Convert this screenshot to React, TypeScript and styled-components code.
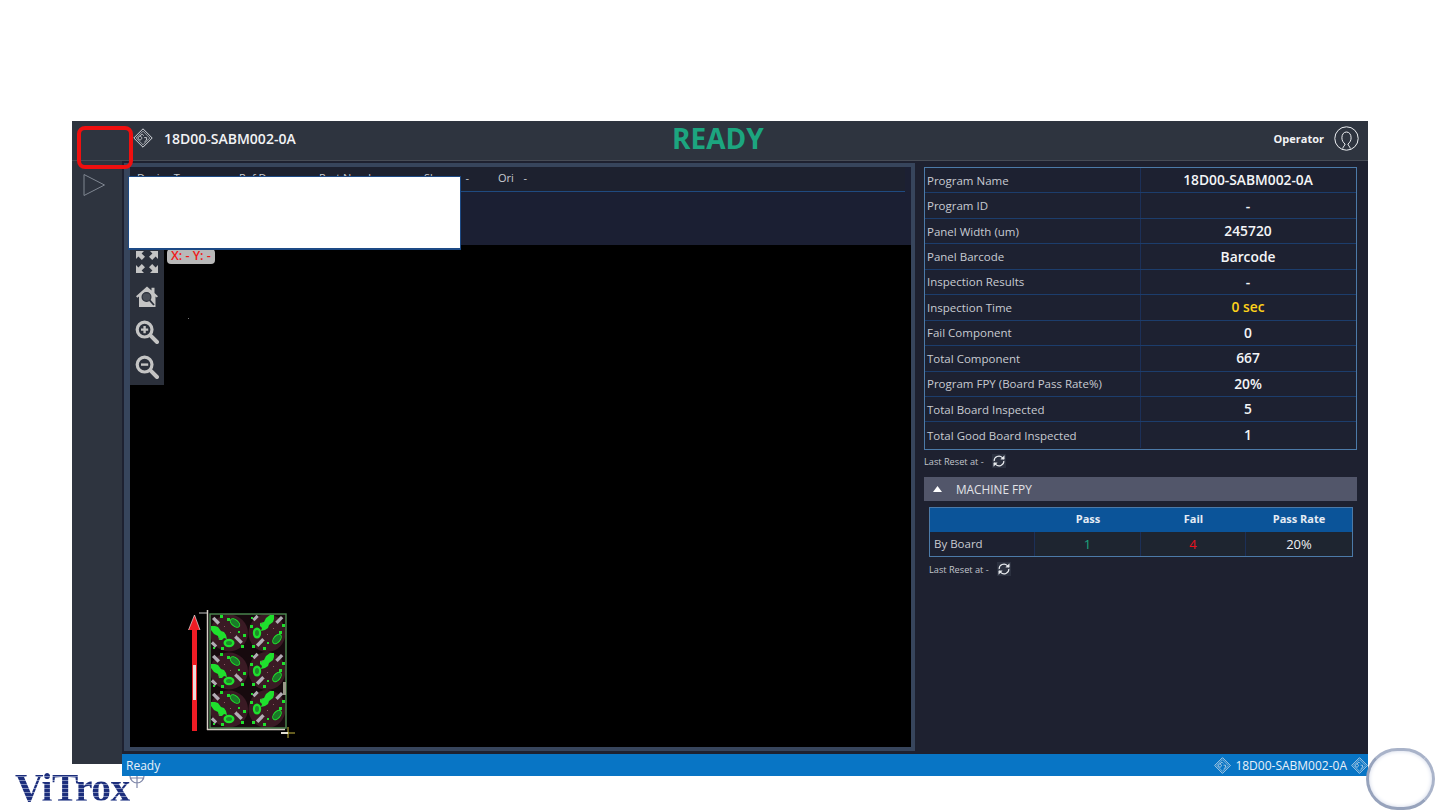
import React from 'react';
import styled, { createGlobalStyle } from 'styled-components';

const Global = createGlobalStyle`
  html, body { margin: 0; padding: 0; background: #fff; overflow: hidden; }
  * { box-sizing: border-box; }
`;

const FONT = `"Open Sans", "Noto Sans", "Liberation Sans", sans-serif`;

const Page = styled.div`
  position: relative;
  width: 1440px;
  height: 810px;
  padding: 121px 72px 0;
  background: #fff;
  font-family: ${FONT};
  overflow: hidden;
`;
const Win = styled.div`
  display: flex;
  flex-direction: column;
  width: 1296px;
`;
const Header = styled.header`
  display: grid;
  grid-template-columns: 539px auto 1fr;
  align-items: center;
  height: 40px;
  padding: 0 9px 8px 61px;
  background: #2e343f;
  border-bottom: 1px solid #474c56;
`;
const ProgramTitle = styled.div`
  display: flex;
  align-items: center;
  gap: 11px;
  color: #f2f3f5;
  font-size: 14px;
  font-weight: 600;
`;
const Ready = styled.div`
  color: #1ca57f;
  font-size: 28px;
  font-weight: 700;
  line-height: 34px;
`;
const UserBox = styled.div`
  display: flex;
  justify-content: flex-end;
  align-items: center;
  gap: 10px;
  color: #f2f3f5;
  font-size: 11px;
  font-weight: 700;
`;
const Body = styled.div`
  display: flex;
  align-items: flex-start;
`;
const Sidebar = styled.nav`
  width: 50px;
  height: 603px;
  padding: 12px 0 0 10px;
  background: #2e343f;
`;
const MainColumn = styled.div`
  display: flex;
  flex-direction: column;
  flex: 1;
`;
const Content = styled.div`
  display: flex;
  height: 593px;
  background: #1e2130;
`;
const ViewPanel = styled.section`
  display: flex;
  flex-direction: column;
  width: 791px;
  height: 588px;
  margin: 2px 0 0 2px;
  background: #1c2033;
  border: solid #37455c;
  border-width: 4px 4px 4px 6px;
`;
const InfoRow = styled.div`
  display: flex;
  align-items: center;
  height: 25px;
  margin-right: 6px;
  padding: 0 0 4px 7px;
  border-bottom: 1px solid #1f4a80;
  background: #1d212f;
  color: #c9ccd2;
  font-size: 11px;
`;
const InfoItem = styled.span<{ $w: number }>`
  display: flex;
  justify-content: space-between;
  width: ${p => p.$w}px;
  flex: none;
  white-space: nowrap;
`;
const InfoGap = styled.div`
  height: 53px;
  background: #1b1f33;
`;
const Canvas = styled.div`
  position: relative;
  flex: 1;
  background: #000;
`;
const Tools = styled.div`
  position: absolute;
  left: 0;
  top: 0;
  display: flex;
  flex-direction: column;
  align-items: center;
  gap: 11px;
  width: 34px;
  height: 140px;
  padding-top: 5px;
  background: #2b303b;
`;
const Coord = styled.div`
  position: absolute;
  left: 37px;
  top: 4px;
  height: 15px;
  padding: 0 4px;
  border-radius: 4px;
  background: #b9b9b9;
  color: #f01818;
  font-size: 12.5px;
  font-weight: 600;
  line-height: 14px;
  white-space: nowrap;
`;
const Speck = styled.i`
  position: absolute;
  left: 58px;
  top: 73px;
  width: 1px;
  height: 1px;
  background: #777;
`;
const BoardWrap = styled.div`
  position: absolute;
  left: 55px;
  top: 360px;
  line-height: 0;
`;
const Mask = styled.div`
  position: absolute;
  left: 128px;
  top: 176px;
  width: 333px;
  height: 74px;
  background: #fff;
  border: 1px solid #1d4a85;
  border-bottom-width: 2px;
`;
const Marker = styled.div`
  position: absolute;
  left: 77px;
  top: 126px;
  width: 56px;
  height: 43px;
  border: 4px solid #f00f0f;
  border-radius: 8px;
`;
const Side = styled.aside`
  display: flex;
  flex-direction: column;
  flex: 1;
  padding: 6px 11px 0 9px;
`;
const StatsTable = styled.div`
  height: 283px;
  border: 1px solid #4c7aa8;
  background: #1d2131;
`;
const StatRow = styled.div`
  display: grid;
  grid-template-columns: 216px 1fr;
  height: 25.45px;
  align-items: center;
  border-bottom: 1px solid #1c3d6c;
  &:last-child { border-bottom: 0; }
`;
const StatLabel = styled.div`
  height: 100%;
  display: flex;
  align-items: center;
  padding-left: 2px;
  border-right: 1px solid #1c3058;
  color: #c8cbd1;
  font-size: 11.5px;
  white-space: nowrap;
`;
const StatValue = styled.div<{ $warn?: boolean }>`
  text-align: center;
  margin-left: -1px;
  color: ${p => (p.$warn ? '#ffd21a' : '#f4f5f7')};
  font-size: 13.8px;
  font-weight: 600;
  padding-bottom: 1px;
`;
const Reset = styled.div`
  display: flex;
  align-items: center;
  gap: 8px;
  height: 18px;
  margin-top: 2px;
  color: #c2c5cc;
  font-size: 9.2px;
`;
const ResetGlyph = styled.span`
  display: inline-flex;
  align-items: center;
  justify-content: center;
  width: 14px;
  height: 14px;
  background: #2c3140;
`;
const SectionBar = styled.div`
  display: flex;
  align-items: center;
  gap: 14px;
  height: 24px;
  margin-top: 7px;
  padding: 0 0 1px 9px;
  background: #52566a;
  color: #e2e3e8;
  font-size: 11.8px;
`;
const FpyTable = styled.div`
  margin: 6px 4px 0 5px;
  border: 1px solid #4c7aa8;
`;
const FpyGrid = styled.div<{ $head?: boolean }>`
  display: grid;
  grid-template-columns: 105px 106px 105px 1fr;
  height: 24px;
  background: ${p => (p.$head ? '#0b5499' : '#1d2131')};
`;
const FpyHead = styled.div`
  display: flex;
  align-items: center;
  justify-content: center;
  padding-bottom: 3px;
  color: #e6ecf4;
  font-size: 11px;
  font-weight: 700;
`;
const FpyCell = styled.div<{ $c?: string; $left?: boolean }>`
  display: flex;
  align-items: center;
  justify-content: ${p => (p.$left ? 'flex-start' : 'center')};
  padding: 0 0 1px ${p => (p.$left ? 4 : 0)}px;
  color: ${p => p.$c ?? '#eef0f3'};
  font-size: ${p => (p.$left ? 11.5 : 13)}px;
  background: ${p => (p.$left ? 'transparent' : '#1e2530')};
  border-right: 1px solid #1c3058;
  &:last-child { border-right: 0; }
`;
const ResetIndented = styled(Reset)`
  margin: 3px 0 0 5px;
`;
const StatusBar = styled.footer`
  display: flex;
  align-items: center;
  justify-content: space-between;
  height: 22px;
  padding-left: 4px;
  background: #0875c5;
  color: #e8f1f9;
  font-size: 12px;
`;
const StatusRight = styled.div`
  display: flex;
  align-items: center;
  gap: 4px;
  font-size: 12px;
`;
const Logo = styled.div`
  position: absolute;
  left: 15px;
  top: 765px;
  font-family: "Liberation Serif", serif;
  font-size: 39.5px;
  font-weight: 700;
  line-height: 46px;
  letter-spacing: -0.5px;
  background: repeating-linear-gradient(180deg, #1c2e7c 0 3px, #7e8ab8 3px 4px);
  -webkit-background-clip: text;
  background-clip: text;
  -webkit-text-fill-color: transparent;
`;
const LogoMark = styled.svg`
  position: absolute;
  left: 128px;
  top: 776px;
`;
const Bubble = styled.div`
  position: absolute;
  left: 1366px;
  top: 748px;
  width: 69px;
  height: 62px;
  border-radius: 50% / 55%;
  background: #fff;
  border: 3px solid #97a3bc;
  border-top-color: #a9b3c9;
  border-right-color: #aab4ca;
  box-shadow: inset 0 0 4px #cfd6e8;
`;

const Diamond = ({ size = 20, color = '#e8ebef' }: { size?: number; color?: string }) => (
  <svg width={size} height={size} viewBox="0 0 20 20" fill="none" stroke={color} strokeWidth="0.9">
    <path d="M10 .8 19.2 10 10 19.2.8 10Z" />
    <path d="M10 3.2 16.8 10 10 16.8 3.2 10Z" strokeWidth="0.6" />
    <path d="M7 8.2 9.2 6l1.6 1.6M8.200 11.400a1.800 1.800 0 1 1 .1-.1M11.200 9.600h2.400v2.400l-2.200 2" strokeWidth="0.8" />
  </svg>
);

const UserIcon = () => (
  <svg width="25" height="25" viewBox="0 0 25 25" fill="none" stroke="#eceef1" strokeWidth="1">
    <circle cx="12.500" cy="12.500" r="11.700" />
    <path d="M8.700 22.600c.4-2.200 2.200-3 2.400-4.600-2-1.400-3.200-3.600-3.200-6.200C7.900 8.400 9.700 6 12.500 6s4.600 2.400 4.600 5.800c0 2.600-1.200 4.800-3.200 6.200.2 1.600 2 2.400 2.400 4.600" />
  </svg>
);

const PlayOutline = () => (
  <svg width="24" height="24" viewBox="0 0 24 24" fill="none" stroke="#7f8691" strokeWidth="1">
    <path d="M2 1.500 22.500 12 2 22.500Z" />
  </svg>
);

const Sync = () => (
  <svg width="14" height="14" viewBox="0 0 13 13" fill="none" stroke="#e8eaee" strokeWidth="1.100">
    <path d="M2 6.600a4.400 4.400 0 0 1 7.600-3.200L11 4.600" />
    <path d="M11.400 1.400v3.400H8" fill="#e8eaee" strokeWidth="0.4" />
    <path d="M11 6.400a4.400 4.400 0 0 1-7.600 3.200L2 8.400" />
    <path d="M1.600 11.600V8.200H5" fill="#e8eaee" strokeWidth="0.4" />
  </svg>
);

const Expand = () => (
  <svg width="24" height="24" viewBox="0 0 24 24" fill="#c4c4c4">
    <path d="M1 1h8L6.600 3.400 10 6.800 6.800 10 3.400 6.600 1 9ZM23 1v8l-2.400-2.400-3.400 3.400L14 6.800l3.400-3.400L15 1ZM1 23v-8l2.400 2.400 3.400-3.400L10 17.200l-3.400 3.400L9 23ZM23 23h-8l2.400-2.400-3.400-3.400 3.200-3.200 3.400 3.400L23 15Z" />
  </svg>
);
const HomeZoom = () => (
  <svg width="24" height="24" viewBox="0 0 24 24">
    <path fill="#c4c4c4" d="M12 1.500 16.500 5.400V2.800h3V8l3.500 3.200-1.200 1.400-1.300-1.100V22H4V11.500l-1.600 1.200L1 11.200Z" />
    <circle cx="11.500" cy="12" r="4.400" fill="#4a4f58" stroke="#2b303b" strokeWidth="1.200" />
    <path d="M14.600 15.200 19 20" stroke="#2b303b" strokeWidth="1.800" />
  </svg>
);
const ZoomGlass = ({ plus }: { plus?: boolean }) => (
  <svg width="24" height="24" viewBox="0 0 24 24" fill="none">
    <circle cx="9.600" cy="9.600" r="7.400" stroke="#c4c4c4" strokeWidth="3.200" />
    <path d="m15.400 15.400 6.600 6.600" stroke="#c4c4c4" strokeWidth="4" strokeLinecap="round" />
    <path d={plus ? 'M6 9.600h7.200M9.600 6v7.200' : 'M6 9.600h7.200'} stroke="#c4c4c4" strokeWidth="2.400" />
  </svg>
);

const Board = () => {
  const tiles: React.ReactNode[] = [];
  for (let r = 0; r < 3; r++) {
    for (let c = 0; c < 2; c++) {
      const x = 25 + c * 38;
      const y = 9 + r * 38;
      tiles.push(
        <use
          key={`${r}-${c}`}
          href="#pcb-tile"
          transform={c === 0 ? `translate(${x} ${y})` : `translate(${x + 38} ${y}) rotate(90)`}
        />
      );
    }
  }
  return (
    <svg width="115" height="140" viewBox="0 0 115 140">
      <defs>
        <g id="pcb-tile">
          <rect width="38" height="38" fill="#170a0e" />
          <ellipse cx="19" cy="19" rx="19" ry="18.500" fill="#3a1a24" />
          <g fill="#1fe02d">
            <path d="M1 12h4l3 1 3 4 3 1 2 3 1 4-3-1-2 2-3 0-1-4-4-2-3-4Z" />
            <ellipse cx="19" cy="29" rx="5.500" ry="4.200" />
            <path d="M10 1h3v3h-3ZM17 4h3v3h-3ZM31 31h3v3h-3ZM33 20h3v3h-3ZM28 17h2v2h-2ZM11 33h3v3h-3ZM3 33h2v2H3Z" />
          </g>
          <ellipse cx="25" cy="9" rx="5.500" ry="3.200" transform="rotate(40 25 9)" fill="#1a7a28" stroke="#1fe02d" strokeWidth="1" />
          <ellipse cx="19" cy="29" rx="3" ry="2" fill="#1f8a2a" />
          <g fill="#b2adb5">
            <rect x="2" y="5" width="8" height="3.400" transform="rotate(45 6 6.700)" />
            <rect x="24" y="24" width="9" height="3.400" transform="rotate(45 28.500 25.700)" />
            <rect x="1" y="29" width="6" height="3" transform="rotate(45 4 30.500)" />
          </g>
          <g fill="#8a5a64">
            <rect x="14" y="12" width="1" height="1" />
            <rect x="20" y="18" width="1" height="1" />
            <rect x="27" y="22" width="1" height="1" />
            <rect x="9" y="24" width="1" height="1" />
          </g>
        </g>
      </defs>
      {tiles}
      <rect x="25" y="9" width="76" height="114" fill="none" stroke="#4d8a52" strokeWidth="1.400" />
      <path d="M22.500 5v120M22 124.500H100" fill="none" stroke="#d6cfc6" strokeWidth="1.500" />
      <path d="M14 8h8" stroke="#c9c9c9" strokeWidth="1" />
      <path d="M98 77h3v13h-3Z" fill="#9a9a8a" />
      <path d="M7 25v101h5V25h3L9.500 10 3.500 25Z" fill="#ee1c24" />
      <path d="M3.500 25 9.500 10 15 25" fill="none" stroke="#e2e2e2" strokeWidth="0.7" />
      <rect x="8" y="60" width="3" height="35" fill="#e9dcdc" />
      <path d="M96 128h14M103 122v11" stroke="#c9b93e" strokeWidth="1" />
      <path d="M96 128h7" stroke="#fff" strokeWidth="1.600" />
    </svg>
  );
};

const stats: { label: string; value: string; warn?: boolean }[] = [
  { label: 'Program Name', value: '18D00-SABM002-0A' },
  { label: 'Program ID', value: '-' },
  { label: 'Panel Width (um)', value: '245720' },
  { label: 'Panel Barcode', value: 'Barcode' },
  { label: 'Inspection Results', value: '-' },
  { label: 'Inspection Time', value: '0 sec', warn: true },
  { label: 'Fail Component', value: '0' },
  { label: 'Total Component', value: '667' },
  { label: 'Program FPY (Board Pass Rate%)', value: '20%' },
  { label: 'Total Board Inspected', value: '5' },
  { label: 'Total Good Board Inspected', value: '1' },
];

export default function App() {
  return (
    <Page>
      <Global />
      <Win>
        <Header>
          <ProgramTitle>
            <Diamond />
            18D00-SABM002-0A
          </ProgramTitle>
          <Ready>READY</Ready>
          <UserBox>
            Operator
            <UserIcon />
          </UserBox>
        </Header>
        <Body>
          <Sidebar>
            <PlayOutline />
          </Sidebar>
          <MainColumn>
            <Content>
              <ViewPanel>
                <InfoRow>
                  <InfoItem $w={102}>Device Type</InfoItem>
                  <InfoItem $w={80}>Ref Des</InfoItem>
                  <InfoItem $w={105}>Part Number</InfoItem>
                  <InfoItem $w={45}>
                    <span>Shape</span>
                    <span>-</span>
                  </InfoItem>
                  <InfoItem $w={29} />
                  <InfoItem $w={29}>
                    <span>Ori</span>
                    <span>-</span>
                  </InfoItem>
                </InfoRow>
                <InfoGap />
                <Canvas>
                  <Tools>
                    <Expand />
                    <HomeZoom />
                    <ZoomGlass plus />
                    <ZoomGlass />
                  </Tools>
                  <Coord>X: - Y: -</Coord>
                  <Speck />
                  <BoardWrap>
                    <Board />
                  </BoardWrap>
                </Canvas>
              </ViewPanel>
              <Side>
                <StatsTable>
                  {stats.map(s => (
                    <StatRow key={s.label}>
                      <StatLabel>{s.label}</StatLabel>
                      <StatValue $warn={s.warn}>{s.value}</StatValue>
                    </StatRow>
                  ))}
                </StatsTable>
                <Reset>
                  Last Reset at -
                  <ResetGlyph>
                    <Sync />
                  </ResetGlyph>
                </Reset>
                <SectionBar>
                  <svg width="9" height="6" viewBox="0 0 9 6">
                    <path d="M4.500 0 9 6H0Z" fill="#fff" />
                  </svg>
                  MACHINE FPY
                </SectionBar>
                <FpyTable>
                  <FpyGrid $head>
                    <FpyHead />
                    <FpyHead>Pass</FpyHead>
                    <FpyHead>Fail</FpyHead>
                    <FpyHead>Pass Rate</FpyHead>
                  </FpyGrid>
                  <FpyGrid>
                    <FpyCell $left $c="#c8cbd1">By Board</FpyCell>
                    <FpyCell $c="#1ca57f">1</FpyCell>
                    <FpyCell $c="#e8121e">4</FpyCell>
                    <FpyCell>20%</FpyCell>
                  </FpyGrid>
                </FpyTable>
                <ResetIndented>
                  Last Reset at -
                  <ResetGlyph>
                    <Sync />
                  </ResetGlyph>
                </ResetIndented>
              </Side>
            </Content>
            <StatusBar>
              Ready
              <StatusRight>
                <Diamond size={17} />
                18D00-SABM002-0A
                <Diamond size={17} />
              </StatusRight>
            </StatusBar>
          </MainColumn>
        </Body>
      </Win>
      <Mask />
      <Marker />
      <Logo>ViTrox</Logo>
      <LogoMark width="18" height="12" viewBox="0 0 18 12" fill="none" stroke="#7e86a8" strokeWidth="1.200">
        <path d="M2 0a7 7 0 0 0 14 0M9 0v12M3 2h12" />
      </LogoMark>
      <Bubble />
    </Page>
  );
}
